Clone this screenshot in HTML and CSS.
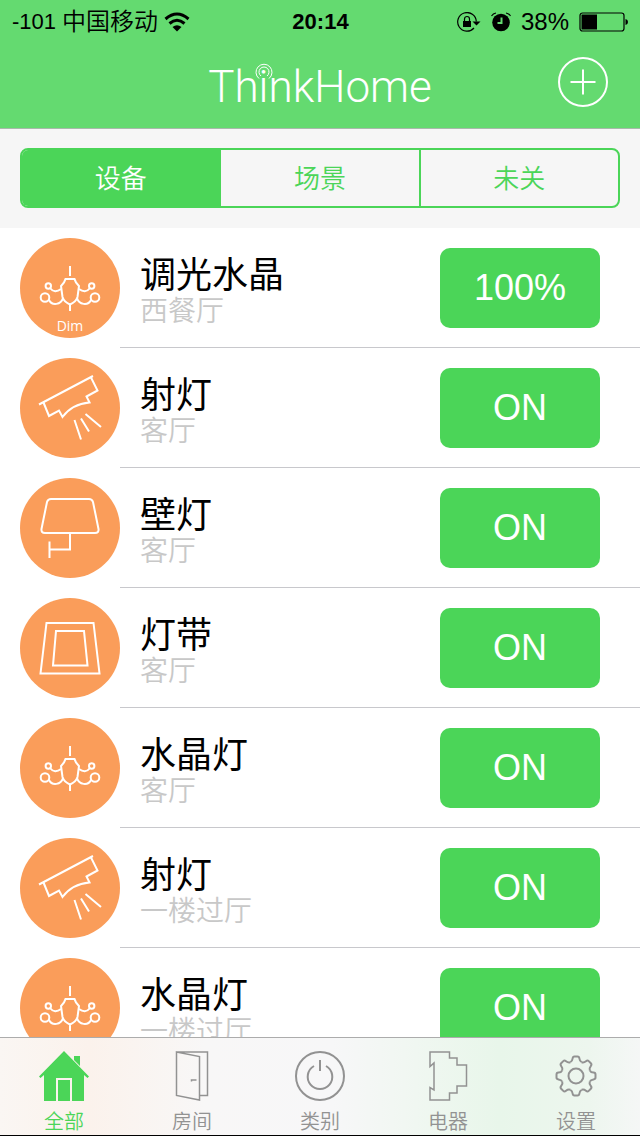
FILE: index.html
```html
<!DOCTYPE html>
<html lang="zh-CN">
<head>
    <meta charset="UTF-8">
    <meta name="viewport" content="width=device-width, initial-scale=1.0">
    <title>ThinkHome</title>
    <link rel="stylesheet" href="styles.css">
</head>
<body>
    <!-- Shared icons -->
    <svg class="sprite" aria-hidden="true">
        <symbol id="chandelier" viewBox="0 0 100 100">
            <path d="M50 28V38M50 66V73M45.500 41H54.500L56 44.500L59 48L57.500 59Q56 64 50 66.500Q44 64 42.500 59L41 48L44 44.500Z"/>
            <circle cx="28.300" cy="48" r="2.700"/>
            <circle cx="71.700" cy="48" r="2.700"/>
            <circle cx="25" cy="59.500" r="4.300"/>
            <circle cx="75" cy="59.500" r="4.300"/>
            <path d="M30.500 50.500C33 54 37 54 41 51M69.500 50.500C67 54 63 54 59 51M29 62C32 68 41 67 43 60M71 62C68 68 59 67 57 60"/>
        </symbol>
        <symbol id="spotlight" viewBox="0 0 100 100">
            <path d="M19 46.500L73 18M23.500 44.500L29 58L39 52.500L42.500 59Q52 46 69.500 44.500L66.500 38.500L77.500 32.500L71 19.500M54.500 62L61 81.500M61 60.500L69 73.500M65.500 56L81 69"/>
        </symbol>
        <symbol id="wall-lamp" viewBox="0 0 100 100">
            <path d="M31 21H69Q72 21 73 24L78.500 51Q79 55 75 55H25Q21 55 21.500 51L27 24Q28 21 31 21ZM50 55V71.500H29.500M29.500 63.500V80"/>
        </symbol>
        <symbol id="light-strip" viewBox="0 0 100 100">
            <path d="M26.500 25H73.500L79.500 75.500H20.500ZM36 33H64L67.500 67.500H33Z"/>
        </symbol>
    </svg>

    <div class="app">
        <header class="header">
            <div class="status">
                <div class="status-left">
                    <span class="signal">-101</span>
                    <span>中国移动</span>
                    <svg class="wifi" viewBox="0 0 26 20" role="img" aria-label="Wi-Fi">
                        <path class="line" d="M1.500 7Q13 -3 24.500 7M5.500 11.500Q13 5 20.500 11.500"/>
                        <path d="M8.500 15Q13 11.500 17.500 15L13 19.500Z"/>
                    </svg>
                </div>
                <time class="clock">20:14</time>
                <div class="status-right">
                    <svg class="lock" viewBox="0 0 24 20" aria-hidden="true">
                        <path class="thin" d="M17 16A9.300 9.300 0 1 1 19.300 9.500"/>
                        <path d="M15.500 9.500H23.500L19.500 13.500Z"/>
                        <rect x="6" y="9" width="8" height="6"/>
                        <path class="thin" d="M7.500 9V7A2.500 2.500 0 0 1 12.500 7V9"/>
                    </svg>
                    <svg class="alarm" viewBox="0 0 20 20" aria-hidden="true">
                        <circle cx="10" cy="10.500" r="8.800"/>
                        <path class="thin" d="M0.500 4Q2 1.500 5 1M19.500 4Q18 1.500 15 1"/>
                        <path class="hands" d="M10.500 5.500V11H6.500"/>
                    </svg>
                    <span>38%</span>
                    <svg class="battery" viewBox="0 0 50 20" aria-hidden="true">
                        <rect class="thin" x="1" y="1" width="44" height="18" rx="2.500"/>
                        <rect x="2.500" y="2.500" width="15.500" height="15"/>
                        <path d="M46.500 7Q49 7.500 49 10Q49 12.500 46.500 13Z"/>
                    </svg>
                </div>
            </div>
            <div class="titlebar">
                <h1 class="logo">Th<span class="beacon">i<svg viewBox="0 0 18 18" aria-hidden="true"><path d="M6 13A5 5 0 1 1 12 13M4 15.500A8 8 0 1 1 14 15.500"/></svg></span>nkHome</h1>
                <button class="add" type="button" aria-label="添加">
                    <svg viewBox="0 0 50 50" aria-hidden="true">
                        <circle cx="25" cy="25" r="24"/>
                        <path d="M25 12.500V37.500M12.500 25H37.500"/>
                    </svg>
                </button>
            </div>
        </header>

        <div class="filter">
            <div class="segments">
                <button class="segment active" type="button">设备</button>
                <button class="segment" type="button">场景</button>
                <button class="segment" type="button">未关</button>
            </div>
        </div>

        <ul class="devices">
            <li class="device">
                <div class="device-icon"><svg><use href="#chandelier"/></svg><span class="dim">Dim</span></div>
                <div class="device-row">
                    <div class="device-info"><h2>调光水晶</h2><p>西餐厅</p></div>
                    <button class="switch" type="button">100%</button>
                </div>
            </li>
            <li class="device">
                <div class="device-icon"><svg><use href="#spotlight"/></svg></div>
                <div class="device-row">
                    <div class="device-info"><h2>射灯</h2><p>客厅</p></div>
                    <button class="switch" type="button">ON</button>
                </div>
            </li>
            <li class="device">
                <div class="device-icon"><svg><use href="#wall-lamp"/></svg></div>
                <div class="device-row">
                    <div class="device-info"><h2>壁灯</h2><p>客厅</p></div>
                    <button class="switch" type="button">ON</button>
                </div>
            </li>
            <li class="device">
                <div class="device-icon"><svg><use href="#light-strip"/></svg></div>
                <div class="device-row">
                    <div class="device-info"><h2>灯带</h2><p>客厅</p></div>
                    <button class="switch" type="button">ON</button>
                </div>
            </li>
            <li class="device">
                <div class="device-icon"><svg><use href="#chandelier"/></svg></div>
                <div class="device-row">
                    <div class="device-info"><h2>水晶灯</h2><p>客厅</p></div>
                    <button class="switch" type="button">ON</button>
                </div>
            </li>
            <li class="device">
                <div class="device-icon"><svg><use href="#spotlight"/></svg></div>
                <div class="device-row">
                    <div class="device-info"><h2>射灯</h2><p>一楼过厅</p></div>
                    <button class="switch" type="button">ON</button>
                </div>
            </li>
            <li class="device">
                <div class="device-icon"><svg><use href="#chandelier"/></svg></div>
                <div class="device-row">
                    <div class="device-info"><h2>水晶灯</h2><p>一楼过厅</p></div>
                    <button class="switch" type="button">ON</button>
                </div>
            </li>
        </ul>

        <nav class="tabbar">
            <a class="tab active" href="#all">
                <svg viewBox="0 0 50 50" aria-hidden="true">
                    <path class="solid" d="M25 0L50 25.500L48.500 27L45 24V50H33V27H17V50H5V24L1.500 27L0 25.500ZM19 29H31V50H19ZM35 5H41V15L35 9Z"/>
                </svg>
                全部
            </a>
            <a class="tab" href="#rooms">
                <svg viewBox="0 0 50 50" aria-hidden="true">
                    <path class="fine" d="M9.500 1H40.500V44.500H33M9.500 1L32.500 5.500V49L9.500 44.500ZM24.500 30.500V29H29.500"/>
                </svg>
                房间
            </a>
            <a class="tab" href="#types">
                <svg viewBox="0 0 50 50" aria-hidden="true">
                    <circle cx="25" cy="25" r="24"/>
                    <path d="M25 9V20M19 15A12.300 12.300 0 1 0 31 15"/>
                </svg>
                类别
            </a>
            <a class="tab" href="#appliances">
                <svg viewBox="0 0 50 50" aria-hidden="true">
                    <path class="fine" d="M7 1H26.500V7H34V14H43.500V35H34V42H26.500V49H7V36.500L11 39V12L7 15.500Z"/>
                </svg>
                电器
            </a>
            <a class="tab" href="#settings">
                <svg viewBox="0 0 50 50" aria-hidden="true">
                    <circle cx="25" cy="25" r="7.500"/>
                    <g transform="translate(25 25)">
                        <path id="tooth" d="M-5.700 -13.800C-4 -14.500 -3.600 -15.500 -3.400 -17.500Q-3.200 -19.500 -1.500 -19.500H1.500Q3.200 -19.500 3.400 -17.500C3.600 -15.500 4 -14.500 5.700 -13.800"/>
                        <use href="#tooth" transform="rotate(45)"/>
                        <use href="#tooth" transform="rotate(90)"/>
                        <use href="#tooth" transform="rotate(135)"/>
                        <use href="#tooth" transform="rotate(180)"/>
                        <use href="#tooth" transform="rotate(225)"/>
                        <use href="#tooth" transform="rotate(270)"/>
                        <use href="#tooth" transform="rotate(315)"/>
                    </g>
                </svg>
                设置
            </a>
        </nav>
    </div>
</body>
</html>
```

FILE: styles.css
```css
* {
    box-sizing: border-box;
}

body {
    margin: 0;
    font-family: "Liberation Sans", "Noto Sans CJK SC", sans-serif;
    font-weight: 350;
    background-color: #fff;
    color: #000;
}

button {
    font: inherit;
    padding: 0;
    border: none;
    cursor: pointer;
}

.sprite {
    display: none;
}

.app {
    display: flex;
    flex-direction: column;
    height: 100vh;
}

/* Header */
.header {
    flex: none;
    background-color: #64da70;
    border-bottom: 1px solid #a9b9ab;
}

.status {
    display: grid;
    grid-template-columns: 1fr auto 1fr;
    align-items: center;
    height: 42px;
    padding: 2px 11px 0 12px;
    font-size: 24px;
    line-height: 40px;
}

.status-left,
.status-right {
    display: flex;
    align-items: center;
    gap: 6px;
}

.status-right {
    justify-content: flex-end;
    gap: 10px;
}

.signal,
.clock {
    font-size: 22px;
}

.clock {
    font-weight: bold;
}

.status svg {
    height: 20px;
}

.status .line {
    fill: none;
    stroke: #000;
    stroke-width: 3;
}

.status .thin {
    fill: none;
    stroke: #000;
    stroke-width: 1.2;
}

.status .hands {
    fill: none;
    stroke: #64da70;
    stroke-width: 2;
}

.wifi {
    width: 26px;
}

.lock {
    width: 24px;
}

.alarm {
    width: 20px;
}

.battery {
    width: 50px;
}

.titlebar {
    display: grid;
    grid-template-columns: 50px 1fr 50px;
    align-items: center;
    height: 86px;
    padding: 0 32px 6px;
}

.logo {
    grid-column: 2;
    margin: 0;
    padding-top: 10px;
    text-align: center;
    font-family: Roboto, sans-serif;
    font-size: 44px;
    font-weight: 300;
    line-height: 60px;
    color: #fff;
}

.beacon {
    position: relative;
}

.beacon svg {
    position: absolute;
    left: 50%;
    top: 2px;
    width: 18px;
    height: 18px;
    margin-left: -9px;
    fill: none;
    stroke: #fff;
}

.add {
    width: 50px;
    height: 50px;
    background: none;
}

.add svg {
    display: block;
    fill: none;
    stroke: #fff;
    stroke-width: 2;
}

/* Segmented control */
.filter {
    flex: none;
    padding: 19px 20px 20px;
    background-color: #f6f6f6;
}

.segments {
    display: flex;
    height: 60px;
    border: 2px solid #4bd558;
    border-radius: 8px;
    overflow: hidden;
}

.segment {
    flex: 1;
    padding-bottom: 4px;
    background: none;
    color: #4bd558;
    font-size: 26px;
}

.segment + .segment {
    border-left: 2px solid #4bd558;
}

.segment.active {
    background-color: #4bd558;
    color: #fff;
}

/* Device list */
.devices {
    flex: 1;
    min-height: 0;
    margin: 0;
    padding: 0;
    list-style: none;
    overflow-y: auto;
    scrollbar-width: none;
}

.device {
    display: flex;
    align-items: center;
    height: 120px;
    padding-left: 20px;
}

.device-icon {
    position: relative;
    flex: none;
    width: 100px;
    height: 100px;
    border-radius: 50%;
    background-color: #fa9d5a;
}

.device-icon svg {
    display: block;
    width: 100px;
    height: 100px;
    fill: none;
    stroke: #fff;
    stroke-width: 2;
}

.dim {
    position: absolute;
    left: 0;
    right: 0;
    bottom: 3px;
    text-align: center;
    font-family: "Open Sans", sans-serif;
    font-size: 14px;
    font-weight: 400;
    line-height: 18px;
    color: #fff;
}

.device-row {
    flex: 1;
    display: flex;
    align-items: center;
    justify-content: space-between;
    height: 120px;
    padding: 0 40px 0 20px;
    border-bottom: 1px solid #c8c8cc;
}

.device-info {
    padding-top: 8px;
}

.device-info h2 {
    margin: 0;
    font-size: 36px;
    font-weight: 400;
    line-height: 40px;
}

.device-info p {
    margin: 0;
    font-size: 28px;
    line-height: 32px;
    color: #c8c8c8;
}

.switch {
    width: 160px;
    height: 80px;
    border-radius: 10px;
    background-color: #4bd558;
    color: #fff;
    font-size: 36px;
}

/* Bottom tabs */
.tabbar {
    flex: none;
    display: flex;
    height: 99px;
    border-top: 1px solid #acacac;
    border-bottom: 1px solid #000;
    background: linear-gradient(to right, #faf6f3 0%, #fbf2ec 14%, #f8f7f7 32%, #f7f7f8 52%, #f0f7f1 65%, #e8f6ea 78%, #edf6ee 92%, #f5f7f6 100%);
}

.tab {
    flex: 1;
    display: flex;
    flex-direction: column;
    align-items: center;
    padding-top: 13px;
    gap: 8px;
    font-size: 20px;
    line-height: 26px;
    color: #929292;
    text-decoration: none;
}

.tab svg {
    width: 50px;
    height: 50px;
    fill: none;
    stroke: currentColor;
    stroke-width: 2;
}

.tab .fine {
    stroke-width: 1.5;
}

.tab .solid {
    fill: currentColor;
    stroke: none;
}

.tab.active {
    color: #4bd558;
}
```
